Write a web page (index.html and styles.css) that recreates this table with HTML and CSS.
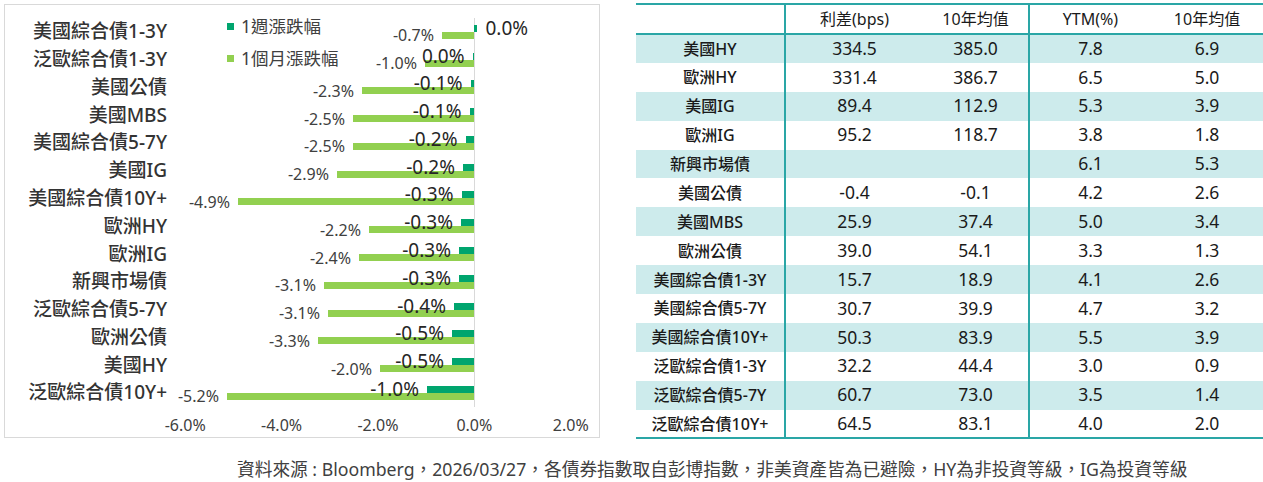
FILE: index.html
```html
<!DOCTYPE html>
<html lang="zh-Hant">
<head>
<meta charset="utf-8">
<title>債券表現</title>
<link rel="stylesheet" href="styles.css">
</head>
<body>
<div class="page">
  <div class="top">
    <section class="chart">
      <div class="legend">
        <div class="legend-item"><span class="swatch swatch-week"></span>1週漲跌幅</div>
        <div class="legend-item"><span class="swatch swatch-month"></span>1個月漲跌幅</div>
      </div>
      <div class="rows">
        <div class="row">
          <div class="cat">美國綜合債1-3Y</div>
          <div class="pos week"><div class="bar bar-week" style="width:2.5px"></div><span class="val val-week val-right">0.0%</span></div>
          <div class="neg month"><span class="val val-month">-0.7%</span><div class="bar bar-month" style="width:32px"></div></div>
        </div>
        <div class="row">
          <div class="cat">泛歐綜合債1-3Y</div>
          <div class="neg week"><span class="val val-week">0.0%</span><div class="bar bar-week" style="width:1.5px"></div></div>
          <div class="neg month"><span class="val val-month">-1.0%</span><div class="bar bar-month" style="width:49px"></div></div>
        </div>
        <div class="row">
          <div class="cat">美國公債</div>
          <div class="neg week"><span class="val val-week">-0.1%</span><div class="bar bar-week" style="width:3.5px"></div></div>
          <div class="neg month"><span class="val val-month">-2.3%</span><div class="bar bar-month" style="width:112px"></div></div>
        </div>
        <div class="row">
          <div class="cat">美國MBS</div>
          <div class="neg week"><span class="val val-week">-0.1%</span><div class="bar bar-week" style="width:4.5px"></div></div>
          <div class="neg month"><span class="val val-month">-2.5%</span><div class="bar bar-month" style="width:121px"></div></div>
        </div>
        <div class="row">
          <div class="cat">美國綜合債5-7Y</div>
          <div class="neg week"><span class="val val-week">-0.2%</span><div class="bar bar-week" style="width:8.5px"></div></div>
          <div class="neg month"><span class="val val-month">-2.5%</span><div class="bar bar-month" style="width:121px"></div></div>
        </div>
        <div class="row">
          <div class="cat">美國IG</div>
          <div class="neg week"><span class="val val-week">-0.2%</span><div class="bar bar-week" style="width:11px"></div></div>
          <div class="neg month"><span class="val val-month">-2.9%</span><div class="bar bar-month" style="width:137px"></div></div>
        </div>
        <div class="row">
          <div class="cat">美國綜合債10Y+</div>
          <div class="neg week"><span class="val val-week">-0.3%</span><div class="bar bar-week" style="width:12.5px"></div></div>
          <div class="neg month"><span class="val val-month">-4.9%</span><div class="bar bar-month" style="width:236px"></div></div>
        </div>
        <div class="row">
          <div class="cat">歐洲HY</div>
          <div class="neg week"><span class="val val-week">-0.3%</span><div class="bar bar-week" style="width:13px"></div></div>
          <div class="neg month"><span class="val val-month">-2.2%</span><div class="bar bar-month" style="width:105px"></div></div>
        </div>
        <div class="row">
          <div class="cat">歐洲IG</div>
          <div class="neg week"><span class="val val-week">-0.3%</span><div class="bar bar-week" style="width:15px"></div></div>
          <div class="neg month"><span class="val val-month">-2.4%</span><div class="bar bar-month" style="width:115px"></div></div>
        </div>
        <div class="row">
          <div class="cat">新興市場債</div>
          <div class="neg week"><span class="val val-week">-0.3%</span><div class="bar bar-week" style="width:15px"></div></div>
          <div class="neg month"><span class="val val-month">-3.1%</span><div class="bar bar-month" style="width:150px"></div></div>
        </div>
        <div class="row">
          <div class="cat">泛歐綜合債5-7Y</div>
          <div class="neg week"><span class="val val-week">-0.4%</span><div class="bar bar-week" style="width:20px"></div></div>
          <div class="neg month"><span class="val val-month">-3.1%</span><div class="bar bar-month" style="width:146px"></div></div>
        </div>
        <div class="row">
          <div class="cat">歐洲公債</div>
          <div class="neg week"><span class="val val-week">-0.5%</span><div class="bar bar-week" style="width:22px"></div></div>
          <div class="neg month"><span class="val val-month">-3.3%</span><div class="bar bar-month" style="width:156px"></div></div>
        </div>
        <div class="row">
          <div class="cat">美國HY</div>
          <div class="neg week"><span class="val val-week">-0.5%</span><div class="bar bar-week" style="width:22px"></div></div>
          <div class="neg month"><span class="val val-month">-2.0%</span><div class="bar bar-month" style="width:94px"></div></div>
        </div>
        <div class="row">
          <div class="cat">泛歐綜合債10Y+</div>
          <div class="neg week"><span class="val val-week">-1.0%</span><div class="bar bar-week" style="width:47px"></div></div>
          <div class="neg month"><span class="val val-month">-5.2%</span><div class="bar bar-month" style="width:247px"></div></div>
        </div>
      </div>
      <div class="axis">
        <span class="tick">-6.0%</span>
        <span class="tick">-4.0%</span>
        <span class="tick">-2.0%</span>
        <span class="tick">0.0%</span>
        <span class="tick">2.0%</span>
      </div>
    </section>

    <table class="spread">
      <colgroup>
        <col class="c-name"><col class="c-a"><col class="c-b"><col class="c-c"><col class="c-d">
      </colgroup>
      <thead>
        <tr><th class="name"></th><th>利差(bps)</th><th class="split">10年均值</th><th>YTM(%)</th><th>10年均值</th></tr>
      </thead>
      <tbody>
        <tr><td class="name">美國HY</td><td class="num">334.5</td><td class="num split">385.0</td><td class="num">7.8</td><td class="num">6.9</td></tr>
        <tr><td class="name">歐洲HY</td><td class="num">331.4</td><td class="num split">386.7</td><td class="num">6.5</td><td class="num">5.0</td></tr>
        <tr><td class="name">美國IG</td><td class="num">89.4</td><td class="num split">112.9</td><td class="num">5.3</td><td class="num">3.9</td></tr>
        <tr><td class="name">歐洲IG</td><td class="num">95.2</td><td class="num split">118.7</td><td class="num">3.8</td><td class="num">1.8</td></tr>
        <tr><td class="name">新興市場債</td><td class="num"></td><td class="num split"></td><td class="num">6.1</td><td class="num">5.3</td></tr>
        <tr><td class="name">美國公債</td><td class="num">-0.4</td><td class="num split">-0.1</td><td class="num">4.2</td><td class="num">2.6</td></tr>
        <tr><td class="name">美國MBS</td><td class="num">25.9</td><td class="num split">37.4</td><td class="num">5.0</td><td class="num">3.4</td></tr>
        <tr><td class="name">歐洲公債</td><td class="num">39.0</td><td class="num split">54.1</td><td class="num">3.3</td><td class="num">1.3</td></tr>
        <tr><td class="name">美國綜合債1-3Y</td><td class="num">15.7</td><td class="num split">18.9</td><td class="num">4.1</td><td class="num">2.6</td></tr>
        <tr><td class="name">美國綜合債5-7Y</td><td class="num">30.7</td><td class="num split">39.9</td><td class="num">4.7</td><td class="num">3.2</td></tr>
        <tr><td class="name">美國綜合債10Y+</td><td class="num">50.3</td><td class="num split">83.9</td><td class="num">5.5</td><td class="num">3.9</td></tr>
        <tr><td class="name">泛歐綜合債1-3Y</td><td class="num">32.2</td><td class="num split">44.4</td><td class="num">3.0</td><td class="num">0.9</td></tr>
        <tr><td class="name">泛歐綜合債5-7Y</td><td class="num">60.7</td><td class="num split">73.0</td><td class="num">3.5</td><td class="num">1.4</td></tr>
        <tr><td class="name">泛歐綜合債10Y+</td><td class="num">64.5</td><td class="num split">83.1</td><td class="num">4.0</td><td class="num">2.0</td></tr>
      </tbody>
    </table>
  </div>
  <p class="footer">資料來源 : Bloomberg，2026/03/27，各債券指數取自彭博指數，非美資產皆為已避險，HY為非投資等級，IG為投資等級</p>
</div>
</body>
</html>
```

FILE: styles.css
```css
* {
  box-sizing: border-box;
}

html, body {
  margin: 0;
  padding: 0;
  background: #ffffff;
}

body {
  font-family: "Noto Sans", "Noto Sans CJK TC", sans-serif;
  color: #262626;
}

.page {
  width: 1263px;
  padding: 4px 0 0 4px;
}

.top {
  display: flex;
  align-items: flex-start;
  gap: 36px;
}

/* ---------- chart ---------- */
.chart {
  position: relative;
  flex: none;
  width: 596px;
  height: 434px;
  border: 1px solid #d9d9d9;
  padding-top: 13px;
}

.legend {
  position: absolute;
  left: 222px;
  top: 5px;
  display: flex;
  flex-direction: column;
  font-size: 17.5px;
  line-height: 32px;
  color: #404040;
}

.legend-item {
  display: flex;
  align-items: center;
  gap: 7px;
  white-space: nowrap;
}

.swatch {
  width: 7px;
  height: 7px;
  flex: none;
}

.swatch-week,
.bar-week {
  background: #00a56e;
}

.swatch-month,
.bar-month {
  background: #92d050;
}

.rows {
  background-image: linear-gradient(#d9d9d9, #d9d9d9);
  background-repeat: no-repeat;
  background-size: 1px 100%;
  background-position: 469px 0;
}

.row {
  display: grid;
  grid-template-columns: 162px 307px 1fr;
  grid-template-rows: 7px 7px;
  align-content: center;
  height: 27.77px;
}

.cat {
  grid-column: 1;
  grid-row: 1 / 3;
  align-self: center;
  text-align: right;
  font-size: 19px;
  font-weight: 500;
  line-height: 1;
  color: #333333;
  white-space: nowrap;
}

.neg,
.pos {
  display: flex;
  align-items: center;
  height: 7px;
}

.neg {
  grid-column: 2;
  justify-content: flex-end;
}

.pos {
  grid-column: 3;
  justify-content: flex-start;
}

.week {
  grid-row: 1;
}

.month {
  grid-row: 2;
}

.bar {
  flex: none;
  height: 7px;
}

.val {
  position: relative;
  z-index: 1;
  white-space: nowrap;
  line-height: 1;
  margin-right: 8px;
}

.val-week {
  font-size: 19px;
  color: #262626;
}

.val-right {
  margin-right: 0;
  margin-left: 9px;
}

.val-month {
  font-size: 16px;
  color: #404040;
}

.axis {
  display: flex;
  margin-top: 8px;
  margin-left: 132px;
  line-height: 20px;
  font-size: 16px;
  color: #404040;
}

.tick {
  flex: none;
  width: 96.4px;
  text-align: center;
}

/* ---------- table ---------- */
.spread {
  flex: none;
  width: 627px;
  margin-top: -1px;
  border-collapse: collapse;
  table-layout: fixed;
  color: #1a1a1a;
}

.c-name { width: 149px; }
.c-a { width: 138px; }
.c-b { width: 106px; }
.c-c { width: 122px; }
.c-d { width: 112px; }

.spread th,
.spread td {
  padding: 0;
  text-align: center;
  white-space: nowrap;
  line-height: 1;
}

.spread thead th {
  height: 30px;
  font-size: 16px;
  font-weight: 400;
  border-top: 2px solid #2aa6a6;
  border-bottom: 2px solid #2aa6a6;
}

.spread tbody td {
  height: 28.9px;
}

.spread tbody tr:nth-child(odd) {
  background: #cdebec;
}

.spread tbody tr:last-child td {
  border-bottom: 2px solid #2aa6a6;
}

.spread .name {
  font-size: 16px;
  font-weight: 500;
  border-right: 2px solid #2aa6a6;
}

.spread .num {
  font-size: 17.5px;
}

.spread .split {
  border-right: 2px solid #2aa6a6;
}

/* ---------- footer ---------- */
.footer {
  margin: 19px 0 0 0;
  padding-left: 233px;
  font-size: 17.7px;
  line-height: 22px;
  color: #404040;
  white-space: nowrap;
}
```
